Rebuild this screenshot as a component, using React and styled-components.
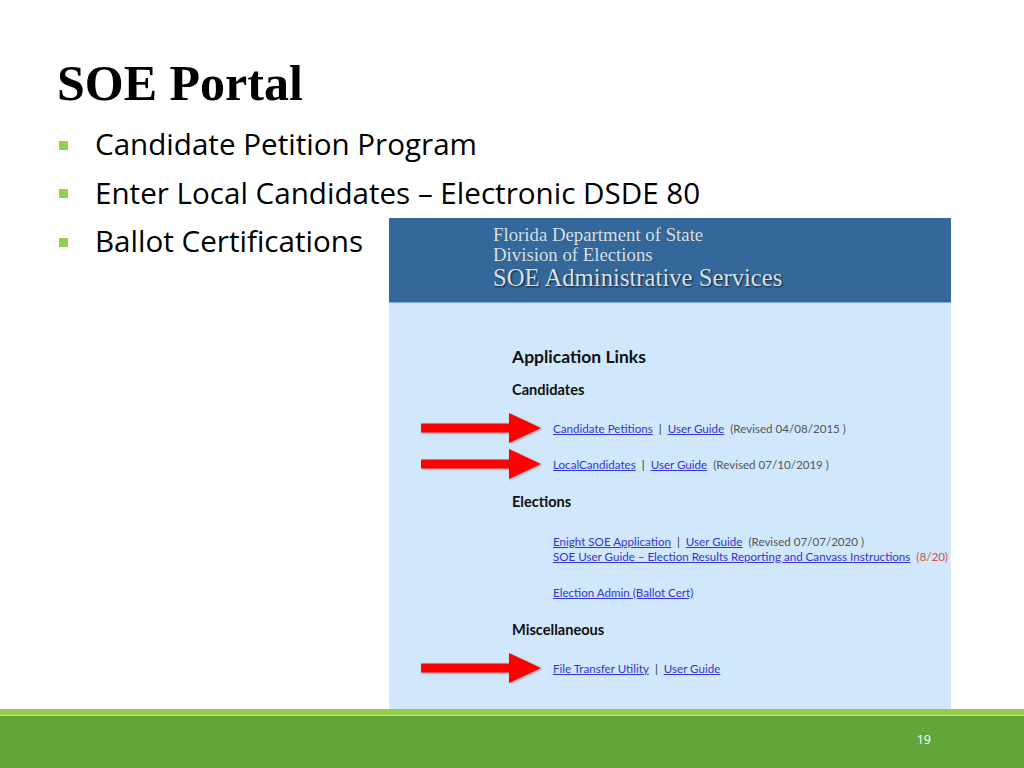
import React from "react";
import styled, { createGlobalStyle } from "styled-components";

const Global = createGlobalStyle`
  html, body { margin: 0; padding: 0; background: #ffffff; }
  #root { width: 1024px; height: 768px; }
`;

const Slide = styled.div`
  width: 1024px;
  height: 768px;
  display: flex;
  flex-direction: column;
  overflow: hidden;
  background: #ffffff;
`;

const Main = styled.div`
  flex: 1;
  display: flex;
  flex-direction: column;
  min-height: 0;
`;

const Title = styled.h1`
  margin: 55px 0 0 57px;
  height: 56px;
  line-height: 56px;
  font-family: "Liberation Serif", "Times New Roman", serif;
  font-weight: 700;
  font-size: 50px;
  color: #000000;
`;

const Body = styled.div`
  flex: 1;
  margin-top: 9px;
  display: grid;
  grid-template-columns: 389px 562px;
  grid-template-rows: 48.5px 48.5px 48.5px 1fr;
  min-height: 0;
`;

const BulletItem = styled.div`
  grid-column: ${(p) => (p.$wide ? "1 / span 2" : "1")};
  display: flex;
  align-items: center;
  gap: 27px;
  padding-left: 59px;
  font-family: "Open Sans", "Liberation Sans", sans-serif;
  font-size: 29.6px;
  line-height: 48.5px;
  color: #000000;
  white-space: nowrap;
`;

const Square = styled.span`
  width: 9px;
  height: 9px;
  flex-shrink: 0;
  margin-top: 2px;
  background: #92d050;
`;

const Panel = styled.div`
  grid-column: 2;
  grid-row: 3 / span 2;
  margin-top: 1px;
  display: flex;
  flex-direction: column;
  min-height: 0;
`;

const PanelHeader = styled.div`
  height: 85px;
  flex-shrink: 0;
  box-sizing: border-box;
  padding: 7px 0 0 104px;
  background: #35689a;
  border-bottom: 1px solid #7fa9d6;
  font-family: "Liberation Serif", "Times New Roman", serif;
  color: #d9e1ec;
`;

const HeaderLine = styled.div`
  font-size: ${(p) => (p.$big ? "24.7px" : "18.8px")};
  line-height: ${(p) => (p.$big ? "28px" : "19.5px")};
  text-shadow: ${(p) => (p.$big ? "1px 1px 2px rgba(0,0,0,0.75)" : "0 0 1px rgba(0,0,0,0.3)")};
  white-space: nowrap;
`;

const PanelBody = styled.div`
  flex: 1;
  background: #d0e7fc;
  padding: 42px 0 0 123px;
  display: flex;
  flex-direction: column;
  font-family: Lato, "Open Sans", sans-serif;
`;

const MainHeading = styled.div`
  font-weight: 700;
  font-size: 17.5px;
  line-height: 24px;
  color: #111111;
`;

const SubHeading = styled.div`
  margin-top: ${(p) => p.$mt || 0}px;
  font-weight: 700;
  font-size: 14.6px;
  line-height: 20px;
  color: #111111;
`;

const LinkRow = styled.div`
  position: relative;
  margin-top: ${(p) => p.$mt || 0}px;
  margin-left: 41px;
  font-size: 11.6px;
  line-height: 15px;
  color: #555555;
  white-space: nowrap;
`;

const A = styled.span`
  color: #3434d4;
  text-decoration: underline;
  text-underline-offset: 1px;
`;

const Sep = styled.span`
  color: #333333;
  margin: 0 6px;
`;

const Note = styled.span`
  margin-left: 6px;
  color: ${(p) => (p.$red ? "#cc5544" : "#555555")};
`;

const ArrowBox = styled.svg`
  position: absolute;
  right: calc(100% + 12px);
  top: 50%;
  transform: translateY(-50%);
  width: 120px;
  height: 30px;
  filter: blur(0.5px) drop-shadow(1px 1px 1px rgba(80, 0, 0, 0.35));
`;

const Arrow = () => (
  <ArrowBox viewBox="0 0 120 30">
    <rect x="0" y="10.5" width="92" height="9" fill="#ff0000" />
    <polygon points="88,0 120,15 88,30" fill="#ff0000" />
  </ArrowBox>
);

const Footer = styled.div`
  height: 59px;
  flex-shrink: 0;
  box-sizing: border-box;
  background: #63a53b;
  border-top: 6px solid #95cb4c;
  box-shadow: inset 0 1px 0 #c4e58e;
  display: flex;
  justify-content: flex-end;
  align-items: center;
  padding: 0 93px 4px 0;
`;

const PageNum = styled.span`
  font-family: "Open Sans", "Liberation Sans", sans-serif;
  font-size: 12.5px;
  color: #ffffff;
`;

export default function App() {
  return (
    <>
      <Global />
      <Slide>
        <Main>
          <Title>SOE Portal</Title>
          <Body>
            <BulletItem $wide>
              <Square />
              Candidate Petition Program
            </BulletItem>
            <BulletItem $wide>
              <Square />
              Enter Local Candidates – Electronic DSDE 80
            </BulletItem>
            <BulletItem>
              <Square />
              Ballot Certifications
            </BulletItem>
            <Panel>
              <PanelHeader>
                <HeaderLine>Florida Department of State</HeaderLine>
                <HeaderLine>Division of Elections</HeaderLine>
                <HeaderLine $big>SOE Administrative Services</HeaderLine>
              </PanelHeader>
              <PanelBody>
                <MainHeading>Application Links</MainHeading>
                <SubHeading $mt={11}>Candidates</SubHeading>
                <LinkRow $mt={20.5}>
                  <Arrow />
                  <A>Candidate Petitions</A>
                  <Sep>|</Sep>
                  <A>User Guide</A>
                  <Note>(Revised 04/08/2015 )</Note>
                </LinkRow>
                <LinkRow $mt={21}>
                  <Arrow />
                  <A>LocalCandidates</A>
                  <Sep>|</Sep>
                  <A>User Guide</A>
                  <Note>(Revised 07/10/2019 )</Note>
                </LinkRow>
                <SubHeading $mt={20.5}>Elections</SubHeading>
                <LinkRow $mt={21.5}>
                  <A>Enight SOE Application</A>
                  <Sep>|</Sep>
                  <A>User Guide</A>
                  <Note>(Revised 07/07/2020 )</Note>
                </LinkRow>
                <LinkRow>
                  <A>SOE User Guide – Election Results Reporting and Canvass Instructions</A>
                  <Note $red>(8/20)</Note>
                </LinkRow>
                <LinkRow $mt={21}>
                  <A>Election Admin (Ballot Cert)</A>
                </LinkRow>
                <SubHeading $mt={20.5}>Miscellaneous</SubHeading>
                <LinkRow $mt={20.5}>
                  <Arrow />
                  <A>File Transfer Utility</A>
                  <Sep>|</Sep>
                  <A>User Guide</A>
                </LinkRow>
              </PanelBody>
            </Panel>
          </Body>
        </Main>
        <Footer>
          <PageNum>19</PageNum>
        </Footer>
      </Slide>
    </>
  );
}
